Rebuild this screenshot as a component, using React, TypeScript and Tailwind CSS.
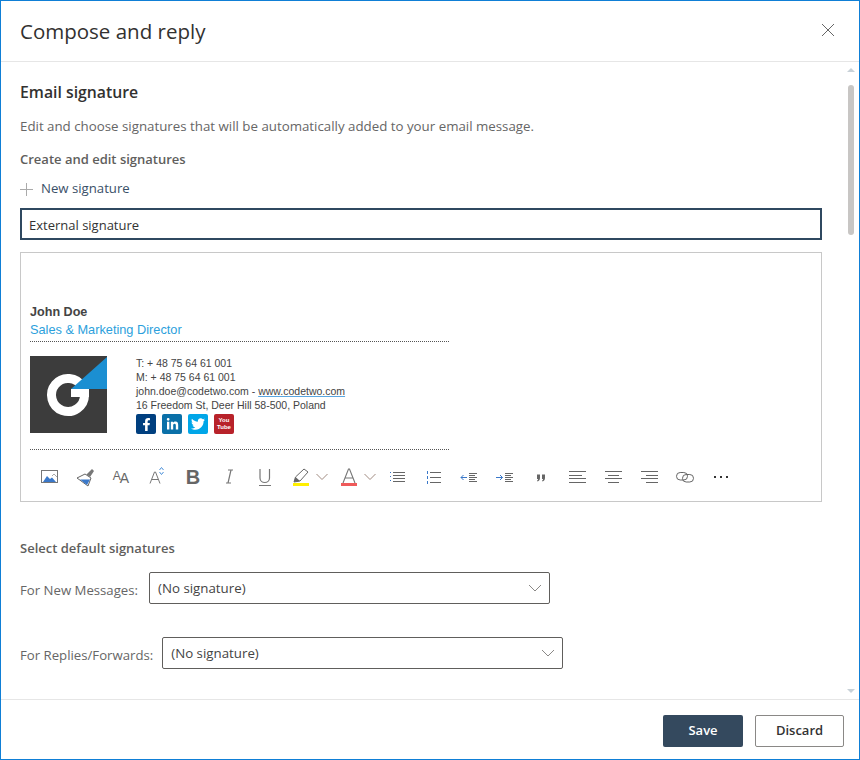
import { FaFacebookF, FaLinkedinIn, FaTwitter } from "react-icons/fa";

const ui = "font-['Open_Sans','Noto_Sans',sans-serif]";

function Svg({ children }: { children: React.ReactNode }) {
  return (
    <svg width="24" height="24" viewBox="0 0 24 24" fill="none" className="block">
      {children}
    </svg>
  );
}

function Chevron() {
  return (
    <svg width="12" height="8" viewBox="0 0 12 8" fill="none" className="block">
      <path d="M.5 1 6 6.500 11.500 1" stroke="#a08a80" strokeWidth="1" />
    </svg>
  );
}

function Lines({ rows }: { rows: number[][] }) {
  return (
    <>
      {rows.map((r, i) => (
        <path key={i} d={`M${r[0]} ${r[2]}.5H${r[1]}`} stroke="#666" />
      ))}
    </>
  );
}

function ToolBtn({ children }: { children: React.ReactNode }) {
  return <div className="flex h-6 w-9 items-center justify-center">{children}</div>;
}

function Toolbar() {
  return (
    <div className="ml-px flex h-6 items-center">
      <ToolBtn>
        <Svg>
          <rect x="4.500" y="5.500" width="16" height="12" stroke="#777" />
          <path d="M6 17l4-6 3 3 2-1.500 4 4.500z" fill="#3a78c9" />
          <path d="M15 11l2-2 3 3" stroke="#aaa" />
        </Svg>
      </ToolBtn>
      <ToolBtn>
        <Svg>
          <path d="M4 13l8-4 6 4-3 8z" fill="#fff" stroke="#666" />
          <path d="M7 14.500h10l-3 5.500z" fill="#3a78c9" />
          <path d="M13.500 9.500l5.500-5.500 2 2-4 6z" fill="#777" />
        </Svg>
      </ToolBtn>
      <ToolBtn>
        <span className="flex items-end font-['Liberation_Sans',sans-serif] leading-none text-[#666]">
          <span className="mb-[3px] text-[12px]">A</span>
          <span className="-ml-px text-[14px]">A</span>
        </span>
      </ToolBtn>
      <ToolBtn>
        <Svg>
          <path d="M5 18.500 9.500 7h1L15 18.500M7 14.500h6" stroke="#777" />
          <path d="M14.500 5l2-2.500 2 2.500M14.500 7l2 2.500 2-2.500" stroke="#4a90d9" />
        </Svg>
      </ToolBtn>
      <ToolBtn>
        <span className="font-['Liberation_Sans',sans-serif] text-[20px] font-bold leading-none text-[#666]">B</span>
      </ToolBtn>
      <ToolBtn>
        <Svg>
          <path d="M9 18h5M11 5h5M14 5l-3 13" stroke="#777" strokeWidth="1.200" />
        </Svg>
      </ToolBtn>
      <ToolBtn>
        <Svg>
          <path d="M7 4v9c0 6 9.500 6 9.500 0V4" stroke="#777" strokeWidth="1.200" />
          <path d="M6 20.500h12" stroke="#777" />
        </Svg>
      </ToolBtn>
      <div className="flex h-6 w-12 items-center pl-[6px]">
        <Svg>
          <path d="M5 17l1.500-5L15 4l4 3-8 9z" fill="#fff" stroke="#666" />
          <path d="M5 17l1.500-5 4.500 4z" fill="#666" />
          <path d="M4 19.500h16" stroke="#ffef00" strokeWidth="3" />
        </Svg>
        <div className="ml-[3px]">
          <Chevron />
        </div>
      </div>
      <div className="flex h-6 w-12 items-center pl-[6px]">
        <Svg>
          <path d="M6 18 11.500 4h1L18 18M8 13h8" stroke="#777" strokeWidth="1.100" />
          <path d="M4 19.500h16" stroke="#ef5a5a" strokeWidth="3" />
        </Svg>
        <div className="ml-[3px]">
          <Chevron />
        </div>
      </div>
      <ToolBtn>
        <Svg>
          <path d="M5.500 7v1M5.500 11v1M5.500 15v1" stroke="#3a78c9" />
          <Lines rows={[[8, 20, 7], [8, 20, 10], [8, 20, 13], [8, 20, 16]]} />
        </Svg>
      </ToolBtn>
      <ToolBtn>
        <Svg>
          <path d="M6.500 6v3M6.500 11v3M6.500 16v3" stroke="#3a78c9" />
          <Lines rows={[[9, 20, 7], [9, 20, 12], [9, 20, 17]]} />
        </Svg>
      </ToolBtn>
      <ToolBtn>
        <Svg>
          <path d="M4 12.500h6M6.500 10l-2.500 2.500 2.500 2.500" stroke="#3a78c9" />
          <Lines rows={[[12, 20, 8], [12, 18, 10], [12, 20, 12], [12, 18, 14], [12, 20, 16]]} />
        </Svg>
      </ToolBtn>
      <ToolBtn>
        <Svg>
          <path d="M3 12.500h6.500M7 10l2.500 2.500L7 15" stroke="#3a78c9" />
          <Lines rows={[[12, 20, 8], [12, 18, 10], [12, 20, 12], [12, 18, 14], [12, 20, 16]]} />
        </Svg>
      </ToolBtn>
      <ToolBtn>
        <Svg>
          <path d="M8 9.500h3V13c0 2-1 3-2.500 3.500l-.5-1c.8-.3 1-.8 1-1.500H8zM13 9.500h3V13c0 2-1 3-2.500 3.500l-.5-1c.8-.3 1-.8 1-1.500h-1z" fill="#666" />
        </Svg>
      </ToolBtn>
      <ToolBtn>
        <Svg>
          <Lines rows={[[4, 21, 6], [4, 17, 10], [4, 21, 13], [4, 21, 17]]} />
        </Svg>
      </ToolBtn>
      <ToolBtn>
        <Svg>
          <Lines rows={[[4, 21, 6], [7, 18, 10], [4, 21, 13], [7, 18, 17]]} />
        </Svg>
      </ToolBtn>
      <ToolBtn>
        <Svg>
          <Lines rows={[[4, 21, 6], [9, 21, 10], [4, 21, 13], [9, 21, 17]]} />
        </Svg>
      </ToolBtn>
      <ToolBtn>
        <Svg>
          <rect x="3.500" y="7.500" width="11" height="7.500" rx="3.700" stroke="#666" />
          <rect x="9.500" y="9.500" width="11" height="7.500" rx="3.700" stroke="#666" />
        </Svg>
      </ToolBtn>
      <ToolBtn>
        <Svg>
          <path d="M5 12h2M11 12h2M17 12h2" stroke="#333" strokeWidth="2" />
        </Svg>
      </ToolBtn>
    </div>
  );
}

function Logo() {
  return (
    <svg width="77" height="77" viewBox="0 0 77 77" className="block shrink-0">
      <rect width="77" height="77" fill="#3c3c3c" />
      <path d="M52.300 30.750A16.500 16.500 0 1 0 54.500 39" fill="none" stroke="#fff" strokeWidth="9" />
      <rect x="41" y="33" width="18" height="8" fill="#fff" />
      <path d="M77 1 41 33H77z" fill="#1b8fd2" />
    </svg>
  );
}

function Social() {
  return (
    <div className="mt-[2px] flex gap-[6px]">
      <div className="flex size-5 items-center justify-center rounded-[2px] bg-[#003f7f] text-white">
        <FaFacebookF size={13} />
      </div>
      <div className="flex size-5 items-center justify-center rounded-[2px] bg-[#0a70a8] text-white">
        <FaLinkedinIn size={13} />
      </div>
      <div className="flex size-5 items-center justify-center rounded-[2px] bg-[#00a6e8] text-white">
        <FaTwitter size={14} />
      </div>
      <div className="flex size-5 flex-col items-center justify-center rounded-[2px] bg-[#b8222a] text-center text-[6px] font-bold leading-[7px] text-white">
        <span>You</span>
        <span>Tube</span>
      </div>
    </div>
  );
}

function Signature() {
  return (
    <div className="w-[419px] font-['Liberation_Sans',Arial,sans-serif] text-[#444]">
      <div className="text-[12.600px] font-bold leading-[18px]">John Doe</div>
      <div className="text-[12.750px] leading-[18px] text-[#2c9fdc]">Sales &amp; Marketing Director</div>
      <div className="mt-[2px] border-t border-dotted border-[#555]" />
      <div className="mt-[14px] flex">
        <Logo />
        <div className="ml-[29px] text-[10.500px] leading-[14px]">
          <div>T: + 48 75 64 61 001</div>
          <div>M: + 48 75 64 61 001</div>
          <div>
            john.doe@codetwo.com - <span className="underline decoration-[#5aa6e0]">www.codetwo.com</span>
          </div>
          <div>16 Freedom St, Deer Hill 58-500, Poland</div>
          <Social />
        </div>
      </div>
      <div className="mt-[15px] border-t border-dotted border-[#555]" />
    </div>
  );
}

function Dropdown() {
  return (
    <div className="flex h-8 w-[401px] items-center justify-between rounded-[2px] border border-[#605e5c] pl-2 pr-[7px] text-[13.300px] text-[#444]">
      <span className="pt-[2px]">(No signature)</span>
      <svg width="14" height="8" viewBox="0 0 14 8" fill="none" className="block">
        <path d="M1 1l6 6 6-6" stroke="#8a8886" />
      </svg>
    </div>
  );
}

export default function App() {
  return (
    <div className={`flex h-[760px] w-[860px] flex-col border border-[#0f7fd6] bg-white ${ui}`}>
      {/* Header */}
      <div className="flex h-[61px] shrink-0 items-center justify-between border-b border-[#e6e6e6] pl-[19px] pr-[24px]">
        <h1 className="text-[20.500px] leading-none text-[#323130]">Compose and reply</h1>
        <svg width="14" height="14" viewBox="0 0 14 14" fill="none" className="mb-[3px] block">
          <path d="M1 1l12 12M13 1 1 13" stroke="#666" />
        </svg>
      </div>

      {/* Body */}
      <div className="flex min-h-0 flex-1">
        <div className="min-w-0 flex-1 overflow-hidden pl-[19px] pr-[22px]">
          <h2 className="mt-[20px] text-[15.800px] font-semibold leading-[20px] text-[#323130]">Email signature</h2>
          <p className="mt-[14px] text-[13.300px] leading-[20px] text-[#666]">
            Edit and choose signatures that will be automatically added to your email message.
          </p>
          <h3 className="mt-[13px] text-[13px] font-semibold leading-[20px] text-[#605e5c]">Create and edit signatures</h3>
          <div className="mt-[10px] flex h-5 items-center gap-2 text-[13.200px] text-[#3a5068]">
            <svg width="13" height="13" viewBox="0 0 13 13" fill="none" className="block">
              <path d="M6.500 0v13M0 6.500h13" stroke="#aaa" />
            </svg>
            <span>New signature</span>
          </div>
          <div className="mt-[9px] flex h-8 items-center border-2 border-[#2f4860] px-[7px] pt-[3px] text-[13px] text-[#333]">External signature</div>
          <div className="mt-3 h-[250px] border border-[#c8c8c8] pl-[9px] pt-[50px]">
            <Signature />
            <div className="mt-[15px]">
              <Toolbar />
            </div>
          </div>
          <h3 className="mt-[36px] text-[13px] font-semibold leading-[20px] text-[#605e5c]">Select default signatures</h3>
          <div className="mt-[14px] flex items-center gap-[11px]">
            <span className="mt-[6px] text-[13.200px] text-[#666]">For New Messages:</span>
            <Dropdown />
          </div>
          <div className="mt-[33px] flex items-center gap-[9px]">
            <span className="mt-[6px] text-[13.200px] text-[#666]">For Replies/Forwards:</span>
            <Dropdown />
          </div>
        </div>
        {/* Scrollbar */}
        <div className="mr-[1px] flex w-[14px] shrink-0 flex-col items-center pt-[6px]">
          <div className="h-0 w-0 border-x-[4px] border-b-[4px] border-x-transparent border-b-[#c8d1d8]" />
          <div className="mt-[13px] h-[150px] w-[6px] rounded-full bg-[#c8c6c4]" />
          <div className="mb-[6px] mt-auto h-0 w-0 border-x-[4px] border-t-[4px] border-x-transparent border-t-[#c8d1d8]" />
        </div>
      </div>

      {/* Footer */}
      <div className="flex h-[60px] shrink-0 items-start justify-end gap-3 border-t border-[#e6e6e6] pr-[15px] pt-[15px]">
        <button className="h-8 w-20 rounded-[2px] bg-[#34495e] text-[13px] font-semibold text-white">Save</button>
        <button className="h-8 w-[89px] rounded-[2px] border border-[#8a8886] bg-white text-[13px] font-semibold text-[#333]">Discard</button>
      </div>
    </div>
  );
}
